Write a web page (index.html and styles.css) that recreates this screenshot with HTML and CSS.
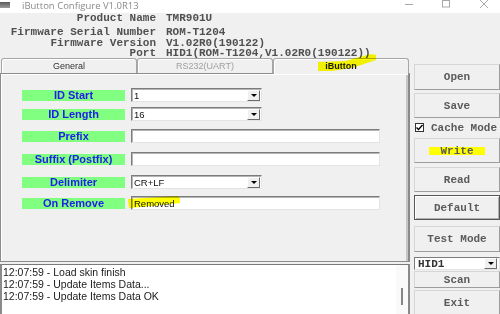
FILE: index.html
```html
<!DOCTYPE html>
<html lang="en">
    <head>
        <meta charset="UTF-8" />
        <meta name="viewport" content="width=device-width, initial-scale=1.0" />
        <title>iButton Configure V1.0R13</title>
        <link rel="stylesheet" href="styles.css">
    </head>
    <body>
        <div class="window">
            <div class="titlebar">
                <span class="app-icon"></span>
                <span class="title">iButton Configure V1.0R13</span>
                <svg class="controls" width="100" height="13" viewBox="0 0 100 13">
                    <line x1="5" y1="4.5" x2="13" y2="4.5" />
                    <rect x="42.5" y="0.5" width="7" height="6.5" />
                    <line x1="80" y1="0" x2="88" y2="8" />
                    <line x1="88" y1="0" x2="80" y2="8" />
                </svg>
            </div>

            <div class="info">
                <div class="info-row first"><span class="key">Product Name</span><span class="val">TMR901U</span></div>
                <div class="info-row"><span class="key">Firmware Serial Number</span><span class="val">ROM-T1204</span></div>
                <div class="info-row"><span class="key">Firmware Version</span><span class="val">V1.02R0(190122)</span></div>
                <div class="info-row"><span class="key">Port</span><span class="val">HID1(ROM-T1204,V1.02R0(190122))</span></div>
            </div>

            <div class="main">
                <div class="left">
                    <div class="tabs">
                        <div class="tab">General</div>
                        <div class="tab disabled">RS232(UART)</div>
                        <div class="tab active">iButton</div>
                    </div>
                    <div class="panel">
                        <div class="field">
                            <span class="tag">ID Start</span>
                            <div class="combo"><span>1</span><span class="drop"></span></div>
                        </div>
                        <div class="field gap5">
                            <span class="tag">ID Length</span>
                            <div class="combo"><span>16</span><span class="drop"></span></div>
                        </div>
                        <div class="field">
                            <span class="tag">Prefix</span>
                            <div class="entry"></div>
                        </div>
                        <div class="field gap9">
                            <span class="tag">Suffix (Postfix)</span>
                            <div class="entry"></div>
                        </div>
                        <div class="field gap9">
                            <span class="tag">Delimiter</span>
                            <div class="combo"><span>CR+LF</span><span class="drop"></span></div>
                        </div>
                        <div class="field gap7">
                            <span class="tag">On Remove</span>
                            <div class="entry"><span>Removed</span></div>
                        </div>
                    </div>
                    <div class="log">
                        <div class="log-lines">
                            <div>12:07:59 - Load skin finish</div>
                            <div>12:07:59 - Update Items Data...</div>
                            <div>12:07:59 - Update Items Data OK</div>
                        </div>
                        <div class="scroll"><span class="thumb"></span></div>
                    </div>
                </div>

                <div class="side">
                    <div class="btn open">Open</div>
                    <div class="btn save">Save</div>
                    <label class="check">
                        <span class="box">
                            <svg width="7" height="7" viewBox="0 0 7 7"><path d="M0.5 3.5 L2.5 5.5 L6.5 1" /></svg>
                        </span>
                        Cache Mode
                    </label>
                    <div class="btn write"><span class="marker">Write</span></div>
                    <div class="btn read">Read</div>
                    <div class="btn default">Default</div>
                    <div class="btn test">Test Mode</div>
                    <div class="port">
                        <span>HID1</span>
                        <span class="drop"></span>
                    </div>
                    <div class="btn scan">Scan</div>
                    <div class="btn exit">Exit</div>
                </div>
            </div>

            <!-- yellow marker strokes drawn over the screenshot -->
            <svg class="marks" width="500" height="314" viewBox="0 0 500 314">
                <polygon points="318,62 345,61 371,54 376,55 376,60 352,68 332,71 318,71" />
                <polygon points="128,199 177,196 180,198 180,203 142,207 129,208" />
            </svg>
        </div>
    </body>
</html>
```

FILE: styles.css
```css
body {
    margin: 0;
    background-color: #f0f0f0;
    overflow: hidden;
}

.window {
    position: relative;
    width: 500px;
    height: 314px;
    overflow: hidden;
    background-color: #f0f0f0;
    color: #333333;
}

/* title bar */
.titlebar {
    display: flex;
    align-items: flex-start;
    height: 13px;
    background-color: #ffffff;
}

.app-icon {
    width: 10px;
    height: 6px;
    margin-top: 2px;
    background: linear-gradient(#5a5a5a, #9a9a9a);
}

.title {
    margin-left: 12px;
    font-family: "Open Sans", sans-serif;
    font-size: 9.5px;
    line-height: 12px;
    color: #8a8a8a;
}

.controls {
    margin-left: auto;
    fill: none;
    stroke: #a8a8a8;
    stroke-width: 1;
}

/* product info */
.info {
    height: 45px;
    font-family: "Liberation Mono", monospace;
    font-size: 11px;
    font-weight: bold;
    color: #505050;
}

.info-row {
    display: grid;
    grid-template-columns: 156px 1fr;
    column-gap: 10px;
    line-height: 10.5px;
}

.info-row.first {
    margin-bottom: 3.5px;
}

.key {
    text-align: right;
}

/* main area */
.main {
    display: flex;
}

.left {
    width: 411px;
}

.tabs {
    display: flex;
    padding-left: 1px;
    font-family: "Liberation Sans", sans-serif;
    font-size: 9px;
}

.tab {
    box-sizing: border-box;
    width: 136px;
    height: 15px;
    line-height: 14px;
    text-align: center;
    border: 1px solid #a6a6a6;
    border-bottom: none;
    border-radius: 3px 3px 0 0;
    box-shadow: inset 1px 1px #ffffff;
    color: #333333;
}

.tab.disabled {
    color: #a0a0a0;
}

.tab.active {
    position: relative;
    z-index: 1;
    height: 16px;
    margin-bottom: -1px;
    background-color: #f0f0f0;
    font-weight: bold;
    color: #1a1a1a;
}

.panel {
    box-sizing: border-box;
    width: 410px;
    height: 189px;
    padding: 14px 0 0 21px;
    border: 1px solid #8c8c8c;
    border-right: 2px solid #8a8a8a;
    box-shadow: inset 1px 1px #ffffff, inset -2px 0 #c6c6c6;
}

.field {
    display: flex;
    align-items: flex-end;
    height: 14px;
    margin-top: 8px;
}

.field:first-child {
    margin-top: 0;
}

.field.gap5 {
    margin-top: 5px;
}

.field.gap9 {
    margin-top: 9px;
}

.field.gap7 {
    margin-top: 7px;
}

.tag {
    width: 103px;
    height: 11px;
    margin: 0 6px 1px 0;
    background-color: #80ff80;
    color: #2020e8;
    font-family: "Liberation Sans", sans-serif;
    font-size: 11px;
    font-weight: bold;
    line-height: 11px;
    text-align: center;
}

.combo,
.entry {
    box-sizing: border-box;
    display: flex;
    align-items: center;
    height: 14px;
    padding-left: 2px;
    background-color: #ffffff;
    border: 1px solid;
    border-color: #7c7c7c #e4e4e4 #e4e4e4 #7c7c7c;
    box-shadow: inset 1px 1px #b4b4b4;
    font-family: "Liberation Sans", sans-serif;
    font-size: 9.5px;
    color: #111111;
}

.combo {
    width: 131px;
}

.entry {
    width: 249px;
}

.combo > span:first-child {
    flex: 1;
}

.drop {
    position: relative;
    box-sizing: border-box;
    width: 13px;
    height: 11px;
    margin-right: 1px;
    background-color: #f0f0f0;
    border: 1px solid;
    border-color: #ffffff #6a6a6a #6a6a6a #ffffff;
}

.drop::after {
    content: "";
    position: absolute;
    left: 3px;
    top: 3px;
    border-left: 3px solid transparent;
    border-right: 3px solid transparent;
    border-top: 3px solid #000000;
}

/* log box */
.log {
    display: flex;
    height: 50px;
    margin-top: 2px;
    background-color: #ffffff;
    border-top: 1px solid #7a7a7a;
    border-left: 2px solid #8a8a8a;
    border-right: 2px solid #8a8a8a;
}

.log-lines {
    flex: 1;
    padding: 1px 0 0 1px;
    font-family: "Liberation Sans", sans-serif;
    font-size: 10.5px;
    line-height: 12px;
    color: #1a1a1a;
}

.scroll {
    width: 12px;
    padding-top: 23px;
    background-color: #fafafa;
}

.thumb {
    display: block;
    width: 2px;
    height: 17px;
    margin-left: 5px;
    background-color: #858585;
}

/* right column */
.side {
    width: 86px;
    margin-left: 4px;
    padding-top: 6px;
    font-family: "Liberation Mono", monospace;
    font-size: 11px;
    font-weight: bold;
    color: #5a5a5a;
}

.btn {
    box-sizing: border-box;
    display: flex;
    align-items: center;
    justify-content: center;
    width: 86px;
    height: 25px;
    border: 1px solid;
    border-color: #d6d6d6 #9c9c9c #9c9c9c #d6d6d6;
}

.btn.open {
    height: 26px;
}

.btn.save {
    margin-top: 3px;
}

.check {
    display: flex;
    align-items: center;
    height: 19px;
    padding-left: 1px;
}

.box {
    box-sizing: border-box;
    display: flex;
    align-items: center;
    justify-content: center;
    width: 9px;
    height: 9px;
    margin-right: 7px;
    background-color: #ffffff;
    border: 1px solid #333333;
}

.box svg {
    fill: none;
    stroke: #000000;
    stroke-width: 1.3;
}

.btn.write {
    margin-top: 1px;
}

.marker {
    padding: 0 11px;
    background-color: #ffff00;
    line-height: 8px;
}

.btn.read {
    margin-top: 4px;
}

.btn.default {
    margin-top: 3px;
    border-color: #555555;
    box-shadow: inset 1px 1px #ffffff, inset -1px -1px #b0b0b0;
}

.btn.test {
    height: 26px;
    margin-top: 6px;
}

.port {
    box-sizing: border-box;
    display: flex;
    align-items: center;
    justify-content: space-between;
    width: 86px;
    height: 13px;
    margin-top: 5px;
    padding-left: 3px;
    background-color: #ffffff;
    border: 1px solid;
    border-color: #7c7c7c #e4e4e4 #e4e4e4 #7c7c7c;
    color: #333333;
}

.port .drop {
    height: 11px;
    margin-right: 2px;
}

.btn.scan {
    height: 17px;
    margin-top: 1px;
}

.btn.exit {
    height: 26px;
    margin-top: 2px;
}

.marks {
    position: absolute;
    left: 0;
    top: 0;
    z-index: 2;
    pointer-events: none;
    mix-blend-mode: multiply;
    fill: #ffff00;
}
```
